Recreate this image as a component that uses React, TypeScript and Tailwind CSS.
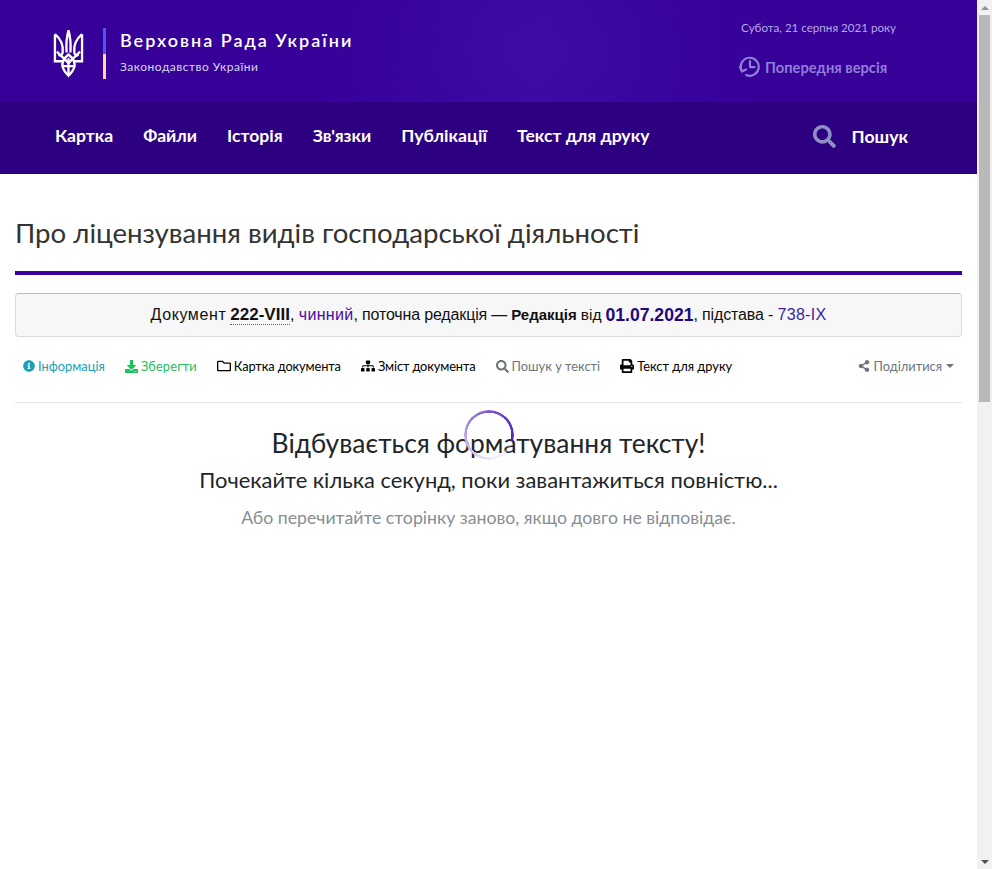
import React from "react";
import { FaInfoCircle, FaDownload, FaRegFolder, FaSitemap, FaSearch, FaPrint, FaShareAlt } from "react-icons/fa";

function Trident() {
  return (
    <svg width="31" height="49" viewBox="0 0 32 50" fill="none" stroke="#fff" strokeWidth="2.4">
      <path d="M16 1 C14 8 13.5 16 14 24 M16 1 C18 8 18.5 16 18 24" />
      <path d="M2 5 L2 33 L10 33 M2 5 C8 10 11 16 10 24 C9.5 27 7 28 6 26" />
      <path d="M30 5 L30 33 L22 33 M30 5 C24 10 21 16 22 24 C22.5 27 25 28 26 26" />
      <path d="M4 23 L16 35 L28 23" />
      <path d="M16 26 C11 30 9 35 10 39 C11 43 14 46 16 48 C18 46 21 43 22 39 C23 35 21 30 16 26 Z" />
      <path d="M16 30 L16 48 M9 38 L23 38" />
    </svg>
  );
}

function HistoryIcon() {
  return (
    <svg width="21" height="21" viewBox="0 0 21 21" fill="none" stroke="#8f7fd6" strokeWidth="2.2" strokeLinecap="round" strokeLinejoin="round">
      <path d="M2.2 13.5 A9 9 0 1 1 7.2 19" />
      <path d="M11 5 V11.2 H15.5" />
      <path d="M1 11 L3 15.5 L7 13.5" />
    </svg>
  );
}

const navItems = ["Картка", "Файли", "Історія", "Зв'язки", "Публікації", "Текст для друку"];

export default function App() {
  return (
    <div className="flex h-[869px] w-[992px] overflow-hidden bg-white font-['Lato',sans-serif] text-[#212529]">
      <div className="w-[977px] shrink-0">
        <header>
          <div className="flex h-[102px] justify-between bg-[#360099] bg-[radial-gradient(circle_at_55%_50%,#3f0ca6_0%,#3a06a0_20%,#360099_42%)] pl-[53px] pr-[81px]">
            <div className="flex items-center">
              <div className="mt-[5px]"><Trident /></div>
              <div className="ml-[19px] mt-[5px] flex h-[51px] w-[3px] flex-col">
                <div className="h-[26px] bg-[#4f55f0]" />
                <div className="h-[25px] bg-[#ffd9a0]" />
              </div>
              <div className="ml-[14px] flex flex-col text-white">
                <div className="text-[18px] font-semibold leading-[26px] tracking-[2px]">Верховна Рада України</div>
                <div className="mt-[6px] text-[12px] leading-[16px] tracking-[0.5px] text-[#ddd6f5]">Законодавство України</div>
              </div>
            </div>
            <div className="flex flex-col items-start pt-[20px]">
              <div className="ml-[2px] text-[11.6px] leading-[16px] text-[#b9a9e8]">Субота, 21 серпня 2021 року</div>
              <div className="mt-[20px] flex items-center gap-[5px]">
                <HistoryIcon />
                <span className="text-[14.7px] font-bold leading-[20px] text-[#8f7fd6]">Попередня версія</span>
              </div>
            </div>
          </div>
          <nav className="flex h-[72px] items-center justify-between bg-[#2c0080] pb-[5px] pl-[55px] pr-[69px]">
            <div className="flex gap-[30px]">
              {navItems.map((t) => (
                <span key={t} className="text-[17.57px] font-bold leading-[24px] text-white">{t}</span>
              ))}
            </div>
            <div className="mt-[2px] flex items-center gap-[16px]">
              <FaSearch className="h-[23px] w-[23px] text-[#8f8fc8]" />
              <span className="text-[17.6px] font-bold leading-[24px] text-white">Пошук</span>
            </div>
          </nav>
        </header>
        <main className="px-[15px]">
          <h1 className="pt-[42px] text-[27.6px] font-normal leading-[34px] text-[#333]">Про ліцензування видів господарської діяльності</h1>
          <div className="mt-[21px] h-[4px] bg-[#3b00a3]" />
          <div className="mt-[18px] flex h-[44px] items-center justify-center rounded-[4px] border border-[#dcdcdc] border-t-[#bbb] bg-[#f7f7f7] font-['Liberation_Sans',sans-serif] text-[16px] text-[#111]">
            <span className="tracking-[0.6px]">Документ</span>
            <b className="ml-[4px] border-b border-dotted border-[#666] text-[17px] font-bold leading-[19px]">222-VIII</b>
            <span>,&nbsp;</span>
            <span className="tracking-[0.3px] text-[#4b0aa8]">чинний</span>
            <span className="tracking-[-0.15px]">, поточна редакція —</span>
            <b className="ml-[4px] text-[15px]">Редакція</b>
            <span className="ml-[4px] text-[15.5px]">від</span>
            <b className="ml-[4px] text-[17.6px] text-[#22087f]">01.07.2021</b>
            <span className="tracking-[-0.15px]">, підстава -&nbsp;</span>
            <span className="tracking-[0.3px] text-[#3a1fa0]">738-IX</span>
          </div>
          <div className="mt-[6px] flex h-[47px] items-center justify-between pl-[8px] pr-[8px] text-[12.85px]">
            <div className="flex items-center gap-[20px]">
              <span className="flex items-center gap-[3px] text-[#17a2b8]"><FaInfoCircle className="h-[12px] w-[12px]" />Інформація</span>
              <span className="flex items-center gap-[3px] tracking-[0.15px] text-[#1dbf5e]"><FaDownload className="h-[13px] w-[13px]" />Зберегти</span>
              <span className="flex items-center gap-[3px] tracking-[-0.12px] text-black"><FaRegFolder className="h-[14px] w-[14px]" />Картка документа</span>
              <span className="flex items-center gap-[3px] tracking-[-0.13px] text-black"><FaSitemap className="h-[14px] w-[14px]" />Зміст документа</span>
              <span className="flex items-center gap-[3px] text-[#6c757d]"><FaSearch className="h-[13px] w-[13px]" />Пошук у тексті</span>
              <span className="flex items-center gap-[3px] text-black"><FaPrint className="h-[14px] w-[14px]" />Текст для друку</span>
            </div>
            <span className="flex items-center gap-[3px] text-[#6c757d]">
              <FaShareAlt className="h-[12px] w-[12px]" />Поділитися
              <span className="ml-[1px] h-0 w-0 border-x-[4px] border-t-[4px] border-x-transparent border-t-[#6c757d]" />
            </span>
          </div>
          <div className="mt-[12px] h-px bg-[#e5e5e5]" />
          <div className="relative flex flex-col items-center pt-[23px] text-center">
            <div className="absolute left-[449px] top-[7px] h-[50px] w-[50px] rounded-full bg-[conic-gradient(from_105deg,rgba(255,255,255,0)_0deg,#efeaf9_70deg,#b7a3e6_165deg,#7a55d0_255deg,#4a1fb8_360deg)] [mask-image:radial-gradient(closest-side,transparent_22px,black_22.5px)]" />
            <div className="text-[26.4px] font-normal leading-[34px] text-[#212529]">Відбувається форматування тексту!</div>
            <div className="mt-[3px] text-[21.9px] font-normal leading-[34px] text-[#212529]">Почекайте кілька секунд, поки завантажиться повністю...</div>
            <div className="mt-[4px] text-[17.7px] font-normal leading-[34px] text-[#868e96]">Або перечитайте сторінку заново, якщо довго не відповідає.</div>
          </div>
        </main>
      </div>
      <div className="flex h-full w-[15px] flex-col bg-[#f1f1f1]">
        <div className="flex h-[15px] items-center justify-center">
          <span className="h-0 w-0 border-x-[4px] border-b-[4px] border-x-transparent border-b-[#8f8f8f]" />
        </div>
        <div className="mx-[2px] h-[387px] bg-[#b9b9b9]" />
        <div className="flex-1" />
        <div className="flex h-[15px] items-center justify-center">
          <span className="h-0 w-0 border-x-[4px] border-t-[4px] border-x-transparent border-t-[#505050]" />
        </div>
      </div>
    </div>
  );
}
